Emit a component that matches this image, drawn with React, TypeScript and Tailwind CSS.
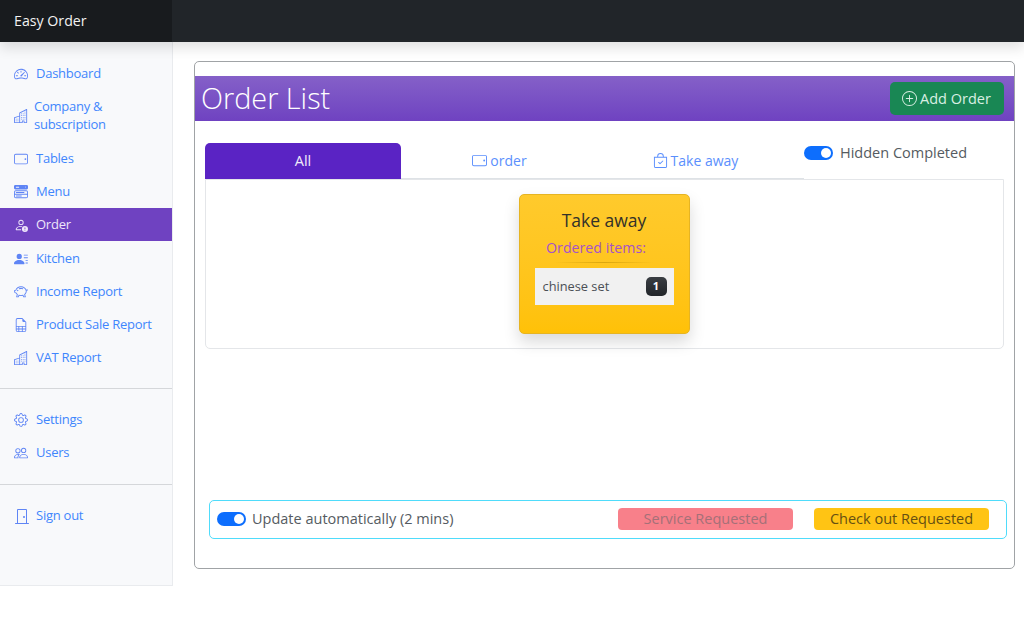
import React from "react";
import {
  BsSpeedometer2, BsBuildings, BsTabletLandscape, BsMenuButtonWideFill, BsPersonLinesFill, BsPiggyBank,
  BsFileEarmarkSpreadsheet, BsGear, BsPeople, BsDoorClosed, BsPlusCircle, BsBagCheck, BsPersonExclamation,
} from "react-icons/bs";

const font = { fontFamily: '"Open Sans", "Noto Sans", sans-serif' };

function Toggle() {
  return (
    <span className="flex h-[14px] w-[29px] shrink-0 items-center justify-end rounded-full bg-[#0d6efd] pr-[2px]">
      <span className="h-[10px] w-[10px] rounded-full bg-white" />
    </span>
  );
}

function NavItem({ icon, label, h = "h-[33px]", active = false }: { icon: React.ReactNode; label: React.ReactNode; h?: string; active?: boolean }) {
  return (
    <div className={`flex items-center pl-[14px] ${h} ${active ? "bg-[#6f42c1] text-[#eee6fa]" : "text-[#3f86fd]"}`}>
      <span className={`flex w-[22px] shrink-0 items-center text-[14px] ${active ? "text-[#eee6fa]" : "text-[#5f85f5]"}`}>{icon}</span>
      <span className="pb-[2px] text-[13px] leading-[18px] tracking-[-0.25px]">{label}</span>
    </div>
  );
}

export default function App() {
  return (
    <div className="flex h-[618px] w-[1024px] flex-col overflow-hidden bg-white" style={font}>
      <header className="relative z-10 flex h-[42px] shrink-0 bg-[#212529] shadow-[0_6px_12px_rgba(0,0,0,0.12)]">
        <div className="flex w-[172px] items-center bg-[#181b1e] pl-[14px] text-[14.2px] text-[#f2f2f2]">Easy Order</div>
      </header>
      <div className="flex flex-1 items-start">
        <aside className="h-[544px] w-[173px] shrink-0 border-r border-b border-[#e9ebee] bg-[#f8f9fb] pt-[15px]">
          <NavItem icon={<BsSpeedometer2 />} label="Dashboard" />
          <NavItem icon={<BsBuildings />} label={<span className="-ml-[2px] block">Company &amp;<br />subscription</span>} h="h-[52px]" />
          <NavItem icon={<BsTabletLandscape />} label="Tables" />
          <NavItem icon={<BsMenuButtonWideFill />} label="Menu" />
          <NavItem active icon={<BsPersonExclamation />} label="Order" />
          <div className="mt-px">
            <NavItem icon={<BsPersonLinesFill />} label="Kitchen" />
          </div>
          <NavItem icon={<BsPiggyBank />} label="Income Report" />
          <NavItem icon={<BsFileEarmarkSpreadsheet />} label="Product Sale Report" />
          <NavItem icon={<BsBuildings />} label="VAT Report" />
          <hr className="mt-[14px] mb-[14px] border-[#d5d7da]" />
          <NavItem icon={<BsGear />} label="Settings" />
          <NavItem icon={<BsPeople />} label="Users" />
          <hr className="mt-[15px] mb-[14px] border-[#d5d7da]" />
          <NavItem icon={<BsDoorClosed className="text-[16px]" />} label="Sign out" />
        </aside>
        <main className="flex-1 pt-[19px] pl-[21px] pr-[9px]">
          <section className="h-[508px] rounded-[5px] border border-[#a0a3a6] pt-[14px]">
            <div className="flex h-[45px] items-center justify-between bg-gradient-to-b from-[#8560c8] to-[#6f42c1] pr-[10px] pl-[6px]">
              <h1 className="text-[28.8px] leading-none font-light text-white">Order List</h1>
              <button className="flex h-[33px] w-[114px] items-center justify-center gap-[3px] rounded-[5px] bg-[#198754] pr-px text-[14.5px] text-[#d9efe3]">
                <BsPlusCircle className="text-[15px]" />
                Add Order
              </button>
            </div>
            <div className="pt-[22px] pl-[10px] pr-[10px]">
              <div className="flex h-[36px]">
                <div className="flex h-[36px] w-[196px] items-center justify-center rounded-t-[5px] bg-[#5a23c4] text-[14.5px] text-[#f0eafa]">All</div>
                <div className="flex w-[197px] items-center justify-center gap-[3px] border-b border-[#dee2e6] text-[14px] text-[#5b8ffd]">
                  <BsTabletLandscape className="text-[15px]" /> order
                </div>
                <div className="flex w-[197px] items-center justify-center gap-[3px] border-b border-[#dee2e6] pr-[2px] text-[14px] text-[#5b8ffd]">
                  <BsBagCheck className="text-[15px]" /> Take away
                </div>
                <div className="w-[9px] border-b border-[#dee2e6]" />
                <div className="flex flex-1 items-start gap-[7px] pt-[3px] text-[14.5px] leading-[14px] text-[#555b61]">
                  <Toggle />
                  Hidden Completed
                </div>
              </div>
              <div className="flex h-[170px] justify-center rounded-b-[5px] border border-[#e4e6e9] pt-[14px] pr-[1px]">
                <div className="h-[140px] w-[171px] rounded-[5px] border border-[#e6b422] bg-gradient-to-b from-[#ffca2c] to-[#ffc107] px-[15px] pt-[13px] shadow-[0_8px_16px_rgba(0,0,0,0.15)]">
                  <div className="text-center text-[17.5px] leading-[24px] text-[#33312a]">Take away</div>
                  <div className="mt-[6px] pr-[16px] text-center text-[14.2px] leading-[20px] text-[#a653c8]">Ordered items:</div>
                  <div className="mx-auto mt-[4px] h-px w-[100px] bg-gradient-to-r from-transparent via-[#d9a60f] to-transparent" />
                  <div className="mt-[5px] flex h-[37px] items-center justify-between bg-[#f1f1f1] pr-[7px] pl-[8px] text-[12.8px] text-[#4a4f55]">
                    <span className="pt-px">chinese set</span>
                    <span className="flex h-[19px] w-[21px] items-center justify-center rounded-[5px] bg-gradient-to-b from-[#3a3e43] to-[#212529] text-[11px] font-bold text-white">1</span>
                  </div>
                </div>
              </div>
              <div className="mt-[151px] -mr-[3px] ml-[4px] flex h-[39px] items-center rounded-[5px] border border-[#4fdcfb] pr-[17px] pb-px pl-[7px]">
                <Toggle />
                <span className="ml-[6px] text-[14.5px] text-[#555b61]">Update automatically (2 mins)</span>
                <span className="ml-auto flex h-[22px] w-[175px] items-center justify-center rounded-[4px] bg-[#f8808a] text-[14.5px] text-[#a57078]">Service Requested</span>
                <span className="ml-[21px] flex h-[22px] w-[175px] items-center justify-center rounded-[4px] bg-[#ffc414] text-[14.5px] text-[#665012]">Check out Requested</span>
              </div>
            </div>
          </section>
        </main>
      </div>
    </div>
  );
}
